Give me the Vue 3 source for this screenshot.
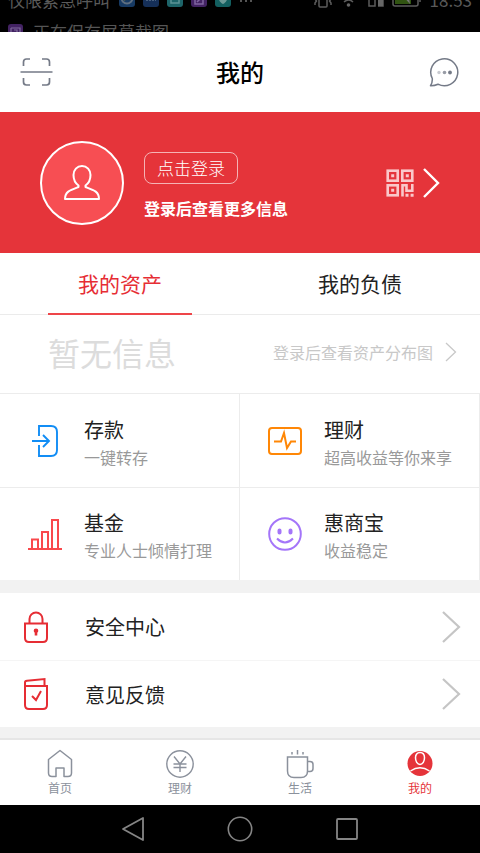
<script setup>
import { ref } from 'vue'

const products = [
  { id: 'deposit', title: '存款', note: '一键转存' },
  { id: 'wealth', title: '理财', note: '超高收益等你来享' },
  { id: 'fund', title: '基金', note: '专业人士倾情打理' },
  { id: 'merchant', title: '惠商宝', note: '收益稳定' }
]

const links = [
  { id: 'security', label: '安全中心' },
  { id: 'feedback', label: '意见反馈' }
]

const pages = [
  { id: 'home', label: '首页' },
  { id: 'money', label: '理财' },
  { id: 'life', label: '生活' },
  { id: 'mine', label: '我的' }
]

const assetTab = ref('assets')
const page = ref('mine')
</script>

<template>
  <div class="screen">
    <div class="status">
      <div class="status-row">
        <span class="carrier">仅限紧急呼叫</span>
        <svg class="badges" width="140" height="16" viewBox="0 0 140 16">
          <rect x="0" y="0" width="16" height="15" rx="3" fill="#173a63" />
          <circle cx="8" cy="6" r="5.500" fill="none" stroke="#5f6f80" stroke-width="2" />
          <path d="M5 8 10 3" stroke="#8a7a2c" stroke-width="2" />
          <rect x="24" y="0" width="16" height="15" rx="3" fill="#152f58" />
          <path d="M27 8h10" stroke="#48607f" stroke-width="2" stroke-dasharray="2 1" />
          <rect x="48" y="0" width="16" height="15" rx="3" fill="#1d6469" />
          <path d="M52 5v6h8V5" fill="none" stroke="#5c9396" stroke-width="1.500" />
          <rect x="72" y="0" width="16" height="15" rx="3" fill="#432363" />
          <path d="M76 4v8h8V4M78 10l4-4" fill="none" stroke="#8065a0" stroke-width="1.500" />
          <rect x="96" y="0" width="16" height="15" rx="3" fill="#135f60" />
          <path d="M100 7a4 4 0 0 1 8 0c0 3-4 5-4 5s-4-2-4-5z" fill="#6d9997" />
          <path d="M121 9h2M126 9h2M131 9h2" stroke="#555" stroke-width="2" />
        </svg>
        <svg class="signals" width="110" height="20" viewBox="0 0 110 20">
          <g fill="none" stroke="#5c5c5c" stroke-width="1.500">
            <rect x="7" y="1" width="8" height="16" rx="1" />
            <path d="M3 6v3l1.500 2L3 13v2M19 6v3l-1.500 2 1.500 2v2" />
            <path d="M29 8q8-7 15 0M32 12q5-4 9 0" />
            <path d="M57 4h6v12h-6zM66 2h5v14h-5" />
            <rect x="81" y="2" width="25" height="14" rx="2" />
            <path d="M108 6v6" />
          </g>
          <circle cx="36.500" cy="15" r="1.800" fill="#666" />
          <rect x="66" y="9" width="5" height="7" fill="#666" />
          <rect x="83" y="4" width="16" height="10" fill="#315412" />
          <path d="m90 5 8 9-1-6 5-1z" fill="#777" />
        </svg>
        <span>18:53</span>
      </div>
      <div class="status-row notice">
        <svg width="15" height="16" viewBox="0 0 15 16">
          <rect width="15" height="16" rx="3" fill="#432363" />
          <path d="M3 4h9v8M3 4v6M6 6h3v3H6" fill="none" stroke="#806a9c" stroke-width="1.200" />
        </svg>
        <span>正在保存屏幕截图</span>
      </div>
    </div>

    <header class="header">
      <button class="icon-button" type="button" aria-label="扫一扫">
        <svg width="34" height="30" viewBox="0 0 34 30" fill="none" stroke="#747a87" stroke-width="1.700">
          <path d="M4.500 9V5q0-3 3-3H11M23 2h4.500q3 0 3 3v4M4.500 21v4q0 3 3 3H11M23 28h4.500q3 0 3-3v-4M1.500 15h32" />
        </svg>
      </button>
      <h1>我的</h1>
      <button class="icon-button" type="button" aria-label="消息">
        <svg width="30" height="30" viewBox="0 0 30 30" fill="none">
          <path d="M3.300 21.500A13.500 13.500 0 1 1 9 27.200Q5.500 28.800 1.500 28.700 3.600 25.500 3.300 21.500z" stroke="#747a87" stroke-width="1.500" stroke-linejoin="round" />
          <circle cx="10" cy="15.500" r="1.700" fill="#c8cad0" />
          <circle cx="15.500" cy="15.500" r="1.800" fill="#989ca6" />
          <circle cx="21" cy="15.500" r="1.900" fill="#747a87" />
        </svg>
      </button>
    </header>

    <section class="hero">
      <span class="avatar">
        <svg width="36" height="38" viewBox="0 0 36 38" fill="none" stroke="#fff" stroke-width="2" stroke-linejoin="round">
          <path d="M14.500 21.500C11 19 9.500 15 9.500 11c0-5 3.500-9 8.500-9s8.500 4 8.500 9c0 4-1.500 8-5 10.500v1.500c8 3 13.500 4.500 13.500 12H1c0-7.500 5.500-9 13.500-12z" />
        </svg>
      </span>
      <div class="login">
        <button class="login-button" type="button">点击登录</button>
        <p>登录后查看更多信息</p>
      </div>
      <button class="qr-button" type="button" aria-label="我的二维码">
        <svg width="28" height="28" viewBox="0 0 28 28">
          <g fill="none" stroke="#fac8ca" stroke-width="2.600">
            <rect x="1.700" y="1.700" width="10" height="10" />
            <rect x="16.300" y="1.700" width="10" height="10" />
            <rect x="1.700" y="16.300" width="10" height="10" />
            <path d="M16.500 27.500V16.300H20.500V21.700H26.300V15" />
          </g>
          <path d="M5.200 5.200h3v3h-3zM19.800 5.200h3v3h-3zM5.200 19.800h3v3h-3zM19.500 24.700h3v3h-3zM24.600 24.700h3v3h-3z" fill="#fac8ca" />
        </svg>
        <svg width="18" height="30" viewBox="0 0 18 30" fill="none" stroke="#fff" stroke-width="2.400">
          <path d="M2 1 16 15 2 29" />
        </svg>
      </button>
    </section>

    <div class="tabs" role="tablist">
      <button type="button" role="tab" :aria-selected="assetTab === 'assets'" :class="{ active: assetTab === 'assets' }" @click="assetTab = 'assets'">我的资产</button>
      <button type="button" role="tab" :aria-selected="assetTab === 'debts'" :class="{ active: assetTab === 'debts' }" @click="assetTab = 'debts'">我的负债</button>
    </div>

    <section class="summary">
      <span class="empty">暂无信息</span>
      <a href="#chart">
        登录后查看资产分布图
        <svg width="12" height="20" viewBox="0 0 12 20" fill="none" stroke="#c8c8c8" stroke-width="1.300">
          <path d="m1 1 9.500 9L1 19" />
        </svg>
      </a>
    </section>

    <section class="products">
      <a v-for="item in products" :key="item.id" class="product" :href="'#' + item.id">
        <svg v-if="item.id === 'deposit'" width="34" height="34" viewBox="0 0 34 34" fill="none" stroke="#118df5" stroke-width="1.900">
          <path d="M11 12V2h12q6 0 6 6v18q0 6-6 6H11V21M4 17h17M15 11l6 6-6 6" />
        </svg>
        <svg v-else-if="item.id === 'wealth'" width="34" height="34" viewBox="0 0 34 34" fill="none" stroke="#ff8706" stroke-width="2">
          <rect x="1" y="4" width="32" height="26" rx="3" />
          <path d="M6 17.500h7L16 9l3 15 4-6.500h5" />
        </svg>
        <svg v-else-if="item.id === 'fund'" width="34" height="34" viewBox="0 0 34 34" fill="none" stroke="#f9484c" stroke-width="2">
          <path d="M0 32h34M4 32V22.500h6V32M14 32V15h6v17M24 32V3h6v29" />
        </svg>
        <svg v-else width="34" height="34" viewBox="0 0 34 34" fill="none" stroke="#a475f9" stroke-width="2">
          <circle cx="17" cy="17" r="15.800" />
          <path d="M9 21.500q8 8 16 0" />
          <rect x="10.500" y="12.500" width="2" height="4" rx="1" />
          <rect x="21.500" y="12.500" width="2" height="4" rx="1" />
        </svg>
        <span class="product-text">
          <strong>{{ item.title }}</strong>
          <small>{{ item.note }}</small>
        </span>
      </a>
    </section>

    <nav class="links">
      <a v-for="item in links" :key="item.id" :href="'#' + item.id">
        <svg v-if="item.id === 'security'" width="24" height="34" viewBox="0 0 24 34" fill="none" stroke="#e62d34" stroke-width="2">
          <path d="M1 13.500h22V28q0 4-4 4H5q-4 0-4-4zM5.500 13V9a6.500 6.500 0 0 1 13 0V13" />
          <path d="M12 18.500a2.300 2.300 0 0 1 2.300 2.300q0 1-1 2V25.500h-2.600v-2.700q-1-1-1-2a2.300 2.300 0 0 1 2.300-2.300z" fill="#e62d34" stroke="none" />
        </svg>
        <svg v-else width="24" height="34" viewBox="0 0 24 34" fill="none" stroke="#e62d34" stroke-width="2">
          <path d="M1 9h22v19q0 4-4 4H5q-4 0-4-4V5.500Q1 4 3 3.800L20.500 2v7M8 19l4 4 5-9" />
        </svg>
        <span>{{ item.label }}</span>
        <svg class="chevron" width="20" height="34" viewBox="0 0 20 34" fill="none" stroke="#c5c5c5" stroke-width="2.200">
          <path d="m2 2 16 15L2 32" />
        </svg>
      </a>
    </nav>

    <nav class="tabbar">
      <button v-for="item in pages" :key="item.id" type="button" :class="{ active: page === item.id }" @click="page = item.id">
        <svg v-if="item.id === 'home'" width="28" height="30" viewBox="0 0 28 30" fill="none" stroke="#8b919c" stroke-width="1.500" stroke-linejoin="round">
          <path d="M2.500 10.500 14 1.500l11.500 9V24q0 3.500-3.500 3.500h-4V19h-8v8.500H6q-3.500 0-3.500-3.500z" />
        </svg>
        <svg v-else-if="item.id === 'money'" width="28" height="30" viewBox="0 0 28 30" fill="none" stroke="#8b919c" stroke-width="1.400">
          <circle cx="14" cy="15" r="13.200" />
          <path d="m8 7.500 6 7.500 6-7.500M7.500 15h13M7.500 18.500h13M14 15v8" />
        </svg>
        <svg v-else-if="item.id === 'life'" width="28" height="30" viewBox="0 0 28 30" fill="none" stroke="#8b919c" stroke-width="1.500">
          <path d="M1.500 8h20v14q0 6.500-6.500 6.500H8Q1.500 28.500 1.500 22zM21.500 12.500H24q3 0 3 3v4q0 3-3 3h-2.500M6 3v2.500M11.500 1v4.500M17 3v2.500" />
        </svg>
        <svg v-else width="28" height="30" viewBox="0 0 28 30" fill="none">
          <circle cx="14" cy="14.500" r="12.500" fill="#e5343a" />
          <path d="M14 3.500c3 0 4.500 2.400 4.500 5.300 0 3.300-1.700 6.700-4.500 6.700s-4.500-3.400-4.500-6.700c0-2.900 1.500-5.300 4.500-5.300zM4.500 22q9.500-6.500 19 0" stroke="#fff" stroke-width="1.500" />
        </svg>
        <span>{{ item.label }}</span>
      </button>
    </nav>

    <div class="system">
      <div class="system-keys">
        <button type="button" aria-label="返回">
          <svg width="26" height="26" viewBox="0 0 26 26" fill="none" stroke="#858585" stroke-width="1.800" stroke-linejoin="round"><path d="M23 2v22L3 13z" /></svg>
        </button>
        <button type="button" aria-label="主屏幕">
          <svg width="26" height="26" viewBox="0 0 26 26" fill="none" stroke="#858585" stroke-width="1.600"><circle cx="13" cy="13" r="11.700" /></svg>
        </button>
        <button type="button" aria-label="最近任务">
          <svg width="26" height="26" viewBox="0 0 26 26" fill="none" stroke="#858585" stroke-width="1.800"><rect x="3" y="3" width="20" height="20" rx="1" /></svg>
        </button>
      </div>
    </div>
  </div>
</template>

<style>
body {
  margin: 0;
  background: #000;
}
</style>

<style scoped>
.screen {
  display: flex;
  flex-direction: column;
  min-height: 100vh;
  background: #f2f2f2;
  color: #222;
  font-family: "Noto Sans CJK SC", sans-serif;
}
* {
  box-sizing: border-box;
}
svg {
  display: block;
  flex: none;
}
button {
  padding: 0;
  border: 0;
  background: none;
  color: inherit;
  font: inherit;
  cursor: pointer;
}
a {
  color: inherit;
  text-decoration: none;
}

.status {
  height: 32px;
  overflow: hidden;
  background: #000;
  color: #5a5a5a;
  font-size: 17px;
  line-height: 32px;
}
.status-row {
  display: flex;
  align-items: center;
  height: 32px;
  padding: 0 8px;
  white-space: nowrap;
}
.status-row:first-child {
  margin-top: -16px;
}
.badges {
  margin-left: 9px;
}
.signals {
  margin: 0 8px 0 auto;
}
.notice {
  gap: 10px;
  color: #555;
}

.header {
  display: grid;
  grid-template-columns: 34px 1fr 34px;
  align-items: center;
  height: 80px;
  padding: 0 19px;
  background: #fff;
}
.header h1 {
  margin: 0;
  color: #000;
  font-size: 24px;
  font-weight: 500;
  line-height: 32px;
  text-align: center;
}
.icon-button {
  display: flex;
  justify-content: center;
}

.hero {
  display: flex;
  align-items: center;
  gap: 20px;
  height: 141px;
  padding: 0 40px;
  background: #e5343a;
  color: #fff;
}
.avatar {
  display: flex;
  align-items: center;
  justify-content: center;
  width: 84px;
  height: 84px;
  border: 2px solid #fff;
  border-radius: 50%;
  background: #f74e53;
}
.login {
  padding-top: 6px;
}
.login-button {
  height: 32px;
  padding: 0 12px;
  border: 1px solid #f5b3b5;
  border-radius: 8px;
  font-size: 17px;
  font-weight: 300;
  line-height: 30px;
}
.login p {
  margin: 12px 0 0;
  font-size: 16px;
  font-weight: 700;
  line-height: 24px;
}
.qr-button {
  display: flex;
  align-items: center;
  gap: 8px;
  margin-left: auto;
}

.tabs {
  display: grid;
  grid-template-columns: 1fr 1fr;
  justify-items: center;
  height: 62px;
  border-bottom: 1px solid #ebebeb;
  background: #fff;
}
.tabs button {
  width: 60%;
  height: 62px;
  border-bottom: 2px solid transparent;
  font-size: 21px;
}
.tabs .active {
  border-color: #ee4549;
  color: #e62d34;
}

.summary {
  display: flex;
  align-items: center;
  justify-content: space-between;
  height: 79px;
  padding: 0 23px 4px 48px;
  border-bottom: 1px solid #ececec;
  background: #fff;
}
.empty {
  color: #dcdcdc;
  font-size: 32px;
}
.summary a {
  display: flex;
  align-items: center;
  gap: 12px;
  color: #c8c8c8;
  font-size: 16px;
}

.products {
  display: grid;
  grid-template-columns: 1fr 1fr;
}
.product {
  display: flex;
  align-items: center;
  gap: 22px;
  height: 93px;
  padding-left: 28px;
  border-right: 1px solid #ececec;
  background: #fff;
}
.product:nth-child(n + 3) {
  border-top: 1px solid #ececec;
}
.product-text {
  display: flex;
  flex-direction: column;
  padding-top: 4px;
  white-space: nowrap;
}
.product strong {
  font-size: 20px;
  font-weight: 400;
  line-height: 28px;
}
.product small {
  color: #999;
  font-size: 16px;
  line-height: 26px;
}

.links {
  margin: 13px 0 11px;
  background: #fff;
}
.links a {
  display: flex;
  align-items: center;
  gap: 37px;
  height: 67px;
  padding: 0 19px 0 24px;
  font-size: 20px;
}
.links a + a {
  border-top: 1px solid #f5f5f5;
}
.chevron {
  margin-left: auto;
}

.tabbar {
  display: grid;
  grid-template-columns: repeat(4, 1fr);
  height: 67px;
  border-top: 2px solid #e6e6e6;
  background: #fff;
  color: #8b919c;
  font-size: 12px;
  line-height: 18px;
}
.tabbar button {
  display: flex;
  flex-direction: column;
  align-items: center;
  justify-content: center;
}
.tabbar .active {
  color: #e5343a;
}

.system {
  flex: 1;
  min-height: 48px;
  background: #000;
}
.system-keys {
  display: grid;
  grid-template-columns: repeat(3, 1fr);
  justify-items: center;
  align-items: center;
  max-width: 320px;
  height: 48px;
  margin: 0 auto;
}
</style>
